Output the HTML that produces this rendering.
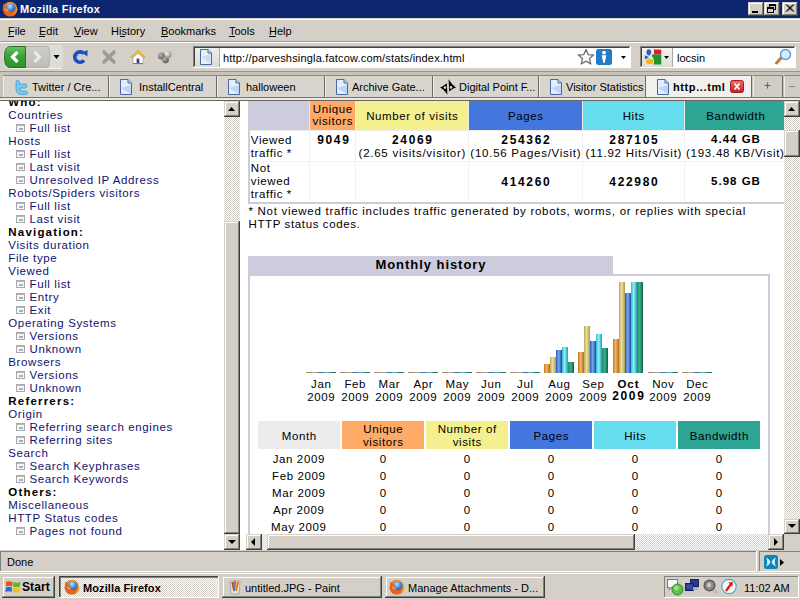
<!DOCTYPE html><html><head><meta charset="utf-8"><style>
html,body{margin:0;padding:0;width:800px;height:600px;overflow:hidden;background:#D4D0C8;}
body{position:relative;font-family:"Liberation Sans",sans-serif;}
.r{position:absolute;}
.t{position:absolute;white-space:nowrap;}
svg{position:absolute;}
</style></head><body>
<div class="r" style="left:0px;top:0px;width:800px;height:18px;background:#0C2670;"></div>
<svg style="left:2px;top:1px" width="16" height="16" viewBox="0 0 16 16">
<defs><radialGradient id="foa" cx="0.65" cy="0.4" r="0.75"><stop offset="0" stop-color="#FFD040"/><stop offset="0.55" stop-color="#F08A20"/><stop offset="1" stop-color="#C84010"/></radialGradient>
<radialGradient id="gla" cx="0.4" cy="0.3" r="0.8"><stop offset="0" stop-color="#B8E0F8"/><stop offset="0.5" stop-color="#4A8AD8"/><stop offset="1" stop-color="#1A3A90"/></radialGradient></defs>
<circle cx="8" cy="8.2" r="7.4" fill="url(#foa)"/>
<circle cx="8.8" cy="7" r="4.8" fill="url(#gla)"/>
<path d="M1.5 2.2 C2.5 4.5 3.8 5.8 5.8 6.3 C5 8 5.8 10.8 8.6 11 C11 11.2 12.8 9.6 13.4 7.2 C13.8 11.2 11.2 14.6 8 14.6 C4.2 14.6 1 11.6 1 7.6 C1 5.6 1.2 3.8 1.5 2.2Z" fill="#E8641A"/>
<path d="M3.2 7.5 C4 9 5 9.8 6.5 9.5" fill="none" stroke="#F8A8A0" stroke-width="1.2"/>
</svg>
<div class="t" style="top:2.69px;font-size:11px;line-height:13px;color:#FFFFFF;font-weight:bold;letter-spacing:0.25px;left:20px;">Mozilla Firefox</div>
<div class="r" style="left:748px;top:2px;width:16px;height:14px;background:#404040;"></div>
<div class="r" style="left:748px;top:2px;width:15px;height:13px;background:#D4D0C8;"></div>
<div class="r" style="left:749px;top:3px;width:14px;height:12px;background:#808080;"></div>
<div class="r" style="left:749px;top:3px;width:13px;height:11px;background:#FFFFFF;"></div>
<div class="r" style="left:750px;top:4px;width:12px;height:10px;background:#D4D0C8;"></div>
<div class="r" style="left:764px;top:2px;width:16px;height:14px;background:#404040;"></div>
<div class="r" style="left:764px;top:2px;width:15px;height:13px;background:#D4D0C8;"></div>
<div class="r" style="left:765px;top:3px;width:14px;height:12px;background:#808080;"></div>
<div class="r" style="left:765px;top:3px;width:13px;height:11px;background:#FFFFFF;"></div>
<div class="r" style="left:766px;top:4px;width:12px;height:10px;background:#D4D0C8;"></div>
<div class="r" style="left:782px;top:2px;width:16px;height:14px;background:#404040;"></div>
<div class="r" style="left:782px;top:2px;width:15px;height:13px;background:#D4D0C8;"></div>
<div class="r" style="left:783px;top:3px;width:14px;height:12px;background:#808080;"></div>
<div class="r" style="left:783px;top:3px;width:13px;height:11px;background:#FFFFFF;"></div>
<div class="r" style="left:784px;top:4px;width:12px;height:10px;background:#D4D0C8;"></div>
<div class="r" style="left:752px;top:11px;width:6px;height:2px;background:#000;"></div>
<svg style="left:766px;top:3px" width="12" height="11" viewBox="0 0 12 11">
<rect x="3.5" y="1.5" width="6" height="5" fill="none" stroke="#000"/><rect x="3" y="1" width="7" height="2" fill="#000"/>
<rect x="1.5" y="4.5" width="6" height="5" fill="#D4D0C8" stroke="#000"/><rect x="1" y="4" width="7" height="2" fill="#000"/>
</svg>
<svg style="left:785px;top:4px" width="10" height="9" viewBox="0 0 10 9">
<path d="M1 0.5 L8 7.5 M2 0.5 L9 7.5 M8 0.5 L1 7.5 M9 0.5 L2 7.5" stroke="#000" stroke-width="1"/>
</svg>
<div class="r" style="left:0px;top:18px;width:800px;height:1px;background:#D4D0C8;"></div>
<div class="r" style="left:0px;top:19px;width:800px;height:1px;background:#FFFFFF;"></div>
<div class="t" style="top:24.99px;font-size:11px;line-height:13px;color:#000;font-weight:normal;left:8px;">File</div>
<div class="t" style="top:24.99px;font-size:11px;line-height:13px;color:#000;font-weight:normal;left:39px;">Edit</div>
<div class="t" style="top:24.99px;font-size:11px;line-height:13px;color:#000;font-weight:normal;left:74px;">View</div>
<div class="t" style="top:24.99px;font-size:11px;line-height:13px;color:#000;font-weight:normal;left:111px;">History</div>
<div class="t" style="top:24.99px;font-size:11px;line-height:13px;color:#000;font-weight:normal;left:161px;">Bookmarks</div>
<div class="t" style="top:24.99px;font-size:11px;line-height:13px;color:#000;font-weight:normal;left:229px;">Tools</div>
<div class="t" style="top:24.99px;font-size:11px;line-height:13px;color:#000;font-weight:normal;left:269px;">Help</div>
<div class="r" style="left:8px;top:36px;width:6px;height:1px;background:#000;"></div>
<div class="r" style="left:39px;top:36px;width:6px;height:1px;background:#000;"></div>
<div class="r" style="left:74px;top:36px;width:7px;height:1px;background:#000;"></div>
<div class="r" style="left:120px;top:36px;width:5px;height:1px;background:#000;"></div>
<div class="r" style="left:161px;top:36px;width:7px;height:1px;background:#000;"></div>
<div class="r" style="left:229px;top:36px;width:6px;height:1px;background:#000;"></div>
<div class="r" style="left:269px;top:36px;width:7px;height:1px;background:#000;"></div>
<div class="r" style="left:0px;top:41px;width:800px;height:1px;background:#A09C94;"></div>
<div class="r" style="left:0px;top:42px;width:800px;height:1px;background:#FFFFFF;"></div>
<svg style="left:2px;top:44px" width="62" height="26" viewBox="0 0 62 26">
<defs>
<linearGradient id="gb" x1="0" y1="0" x2="0" y2="1"><stop offset="0" stop-color="#6CC068"/><stop offset="0.45" stop-color="#3AA238"/><stop offset="1" stop-color="#2A962A"/></linearGradient>
<linearGradient id="gf" x1="0" y1="0" x2="0" y2="1"><stop offset="0" stop-color="#CFCDC8"/><stop offset="1" stop-color="#BEBCB6"/></linearGradient>
</defs>
<path d="M60 1 C62 6 62 20 60 25 L9 25 C3 25 0.5 21 0.5 13 C0.5 5 3 1 9 1Z" fill="#DEDCD6"/>
<path d="M59 24.5 L9 24.5" stroke="#F6F4F0" stroke-width="1"/>
<path d="M23 2.5 L46 2.5 C48.5 6 48.5 20 46 23.5 L23 23.5Z" fill="url(#gf)" stroke="#B4B2AC" stroke-width="1"/>
<path d="M23.5 2.5 L8.5 2.5 C4 2.5 2.5 6 2.5 13 C2.5 20 4 23.5 8.5 23.5 L23.5 23.5Z" fill="url(#gb)" stroke="#2A6A28" stroke-width="1"/>
<path d="M15.5 8 L10.5 13 L15.5 18" fill="none" stroke="#FFFFFF" stroke-width="3.2"/>
<path d="M32.5 8 L37.5 13 L32.5 18" fill="none" stroke="#EEECE6" stroke-width="3"/>
<path d="M51.5 11 L57.5 11 L54.5 15Z" fill="#000"/>
</svg>
<svg style="left:72px;top:49px" width="16" height="16" viewBox="0 0 16 16">
<path d="M12 11.3 A5.2 5.2 0 1 1 11.8 4.6" fill="none" stroke="#1A4EC0" stroke-width="3.6"/>
<path d="M9.6 3.4 L15.6 0.9 L15.4 7.6Z" fill="#1A4EC0"/>
<path d="M5 9.5 A3.2 3.2 0 0 1 6.5 5.2" fill="none" stroke="#5A8AE0" stroke-width="1"/>
</svg>
<svg style="left:101px;top:49px" width="16" height="16" viewBox="0 0 16 16">
<path d="M3 3 L13 13 M13 3 L3 13" stroke="#9C9A92" stroke-width="3.6" stroke-linecap="round"/>
</svg>
<svg style="left:130px;top:49px" width="16" height="16" viewBox="0 0 16 16">
<path d="M0.8 8.2 L8 1.2 L15.2 8.2 L13 8.8 L8 4.5 L3 8.8Z" fill="#F2C020" stroke="#D89A10" stroke-width="0.6"/>
<path d="M3 8.5 L8 4.2 L13 8.5 L13 14.8 L3 14.8Z" fill="#FFFFFF" stroke="#9AA0B0" stroke-width="0.7"/>
<rect x="6.6" y="9.6" width="2.8" height="5.2" fill="#404A60"/>
<rect x="3" y="14" width="10" height="1" fill="#5A7AC0"/>
</svg>
<svg style="left:157px;top:50px" width="16" height="14" viewBox="0 0 16 14">
<defs><radialGradient id="sph" cx="0.35" cy="0.35" r="0.7"><stop offset="0" stop-color="#B8B6B2"/><stop offset="1" stop-color="#585652"/></radialGradient>
<radialGradient id="sph2" cx="0.35" cy="0.35" r="0.7"><stop offset="0" stop-color="#F4F4F2"/><stop offset="1" stop-color="#8A8884"/></radialGradient></defs>
<circle cx="4.5" cy="6" r="3.6" fill="url(#sph)"/><circle cx="8.5" cy="9.8" r="3.4" fill="url(#sph)"/><circle cx="11" cy="4.5" r="3.6" fill="url(#sph2)"/>
</svg>
<div class="r" style="left:193px;top:46px;width:438px;height:22px;background:#FFFFFF;"></div>
<div class="r" style="left:193px;top:46px;width:437px;height:21px;background:#808080;"></div>
<div class="r" style="left:194px;top:47px;width:436px;height:20px;background:#D4D0C8;"></div>
<div class="r" style="left:194px;top:47px;width:435px;height:19px;background:#404040;"></div>
<div class="r" style="left:195px;top:48px;width:435px;height:19px;background:#FFFFFF;"></div>
<div class="r" style="left:195px;top:48px;width:24px;height:19px;background:linear-gradient(#F0EEEA,#DCDAD4);"></div>
<div class="r" style="left:219px;top:48px;width:1px;height:19px;background:#B0AEA8;"></div>
<svg style="left:199px;top:49px" width="14" height="16" viewBox="0 0 14 16">
<path d="M1.5 0.5 L9 0.5 L12.5 4 L12.5 15.5 L1.5 15.5Z" fill="#E8F0FC" stroke="#4A68A8"/>
<path d="M9 0.5 L9 4 L12.5 4" fill="#C8D8F0" stroke="#4A68A8"/>
<path d="M2.5 8 L11.5 15 L11.5 5Z" fill="#B8D0F0" opacity="0.6"/>
</svg>
<div class="t" style="top:51.69px;font-size:11px;line-height:13px;color:#000;font-weight:normal;letter-spacing:0.18px;left:223px;">http://parveshsingla.fatcow.com/stats/index.html</div>
<svg style="left:577px;top:48px" width="18" height="18" viewBox="0 0 18 18">
<path d="M9 1.5 L11.2 6.6 L16.6 7 L12.5 10.6 L13.8 16 L9 13.1 L4.2 16 L5.5 10.6 L1.4 7 L6.8 6.6Z" fill="#FFFFFF" stroke="#707070" stroke-width="1.3" stroke-linejoin="round"/>
</svg>
<svg style="left:596px;top:49px" width="16" height="16" viewBox="0 0 16 16">
<rect x="0" y="0" width="16" height="16" rx="2.5" fill="#1E7CC8"/>
<circle cx="8" cy="3.6" r="1.9" fill="#fff"/><path d="M5.6 6.2 L10.4 6.2 L8.6 14 L7.4 14Z" fill="#fff"/>
</svg>
<svg style="left:621px;top:56px" width="5" height="3" viewBox="0 0 5 3"><path d="M0 0 L5 0 L2.5 3Z" fill="#000"/></svg>
<div class="r" style="left:640px;top:46px;width:156px;height:22px;background:#FFFFFF;"></div>
<div class="r" style="left:640px;top:46px;width:155px;height:21px;background:#808080;"></div>
<div class="r" style="left:641px;top:47px;width:154px;height:20px;background:#D4D0C8;"></div>
<div class="r" style="left:641px;top:47px;width:153px;height:19px;background:#404040;"></div>
<div class="r" style="left:642px;top:48px;width:153px;height:19px;background:#FFFFFF;"></div>
<div class="r" style="left:642px;top:48px;width:30px;height:19px;background:linear-gradient(#F4F2EE,#E0DED8);"></div>
<div class="r" style="left:672px;top:48px;width:1px;height:19px;background:#A8A6A0;"></div>
<svg style="left:644px;top:48px" width="18" height="18" viewBox="0 0 18 18">
<ellipse cx="4.8" cy="4.3" rx="2.4" ry="3.1" fill="#2A62C8"/>
<path d="M0.8 7.2 L5.2 9.3 L0.8 11.2Z" fill="#2A5AB8"/>
<ellipse cx="5.6" cy="13.4" rx="3.6" ry="2.6" fill="#F4B41A"/>
<path d="M9.8 1.5 L16.5 1.5 C17 1.5 17.3 2 17.3 3 L17.3 6.4 L10.2 6.4Z" fill="#E41E1E"/>
<path d="M8 6.4 L17.3 6.4 L17.3 16.5 L9.5 16.5 C10.5 14 10 10 8 8.5Z" fill="#1E962E"/>
</svg>
<svg style="left:664px;top:56px" width="5" height="3" viewBox="0 0 5 3"><path d="M0 0 L5 0 L2.5 3Z" fill="#000"/></svg>
<div class="t" style="top:51.69px;font-size:11px;line-height:13px;color:#000;font-weight:normal;left:677px;">locsin</div>
<svg style="left:775px;top:48px" width="17" height="17" viewBox="0 0 17 17">
<path d="M6 10 L1.5 15" stroke="#D07A30" stroke-width="3" stroke-linecap="round"/>
<circle cx="10.5" cy="6.5" r="5" fill="#D4ECFC" stroke="#5A9AD0" stroke-width="1.4"/>
</svg>
<div class="r" style="left:0px;top:71px;width:800px;height:1px;background:#9A968E;"></div>
<div class="r" style="left:0px;top:72px;width:800px;height:25px;background:#C8C4BC;"></div>
<div class="r" style="left:3px;top:75px;width:106px;height:22px;background:#8A867E;"></div>
<div class="r" style="left:3px;top:76px;width:105px;height:21px;background:#F0EEE8;"></div>
<div class="r" style="left:4px;top:76px;width:104px;height:21px;background:#D8D5CE;"></div>
<div class="r" style="left:108px;top:76px;width:1px;height:21px;background:#6E6A62;"></div>
<svg style="left:14px;top:79px" width="16" height="16" viewBox="0 0 16 16">
<path d="M3 1.5 C5 1.5 5.5 2.5 5.5 4 L5.5 5 L11 5 C12.5 5 13 6 13 7 C13 8 12.5 9 11 9 L6 9 C6 11 6.5 12 8 12 L11.5 12 C13 12 13.5 13 13.5 14 C13.5 15 13 15.5 11.5 15.5 L7.5 15.5 C4 15.5 2 13.5 2 10 L2 3 C2 2 2.5 1.5 3 1.5Z" fill="#7CC8EC" stroke="#3AA0D8" stroke-width="0.8"/></svg>
<div class="t" style="top:81.09px;font-size:11px;line-height:13px;color:#000;font-weight:normal;left:32px;">Twitter / Cre...</div>
<div class="r" style="left:109px;top:75px;width:108px;height:22px;background:#8A867E;"></div>
<div class="r" style="left:109px;top:76px;width:107px;height:21px;background:#F0EEE8;"></div>
<div class="r" style="left:110px;top:76px;width:106px;height:21px;background:#D8D5CE;"></div>
<div class="r" style="left:216px;top:76px;width:1px;height:21px;background:#6E6A62;"></div>
<svg style="left:119px;top:79px" width="14" height="16" viewBox="0 0 14 16">
<path d="M1.5 0.5 L9 0.5 L12.5 4 L12.5 15.5 L1.5 15.5Z" fill="#E4EEFC" stroke="#4A68A8"/>
<path d="M9 0.5 L9 4 L12.5 4" fill="#C8D8F0" stroke="#4A68A8"/>
<path d="M2 9 L12 15 L12 6Z" fill="#A8C4EC" opacity="0.6"/></svg>
<div class="t" style="top:81.09px;font-size:11px;line-height:13px;color:#000;font-weight:normal;left:139px;">InstallCentral</div>
<div class="r" style="left:217px;top:75px;width:108px;height:22px;background:#8A867E;"></div>
<div class="r" style="left:217px;top:76px;width:107px;height:21px;background:#F0EEE8;"></div>
<div class="r" style="left:218px;top:76px;width:106px;height:21px;background:#D8D5CE;"></div>
<div class="r" style="left:324px;top:76px;width:1px;height:21px;background:#6E6A62;"></div>
<svg style="left:227px;top:79px" width="14" height="16" viewBox="0 0 14 16">
<path d="M1.5 0.5 L9 0.5 L12.5 4 L12.5 15.5 L1.5 15.5Z" fill="#E4EEFC" stroke="#4A68A8"/>
<path d="M9 0.5 L9 4 L12.5 4" fill="#C8D8F0" stroke="#4A68A8"/>
<path d="M2 9 L12 15 L12 6Z" fill="#A8C4EC" opacity="0.6"/></svg>
<div class="t" style="top:81.09px;font-size:11px;line-height:13px;color:#000;font-weight:normal;left:246px;">halloween</div>
<div class="r" style="left:325px;top:75px;width:108px;height:22px;background:#8A867E;"></div>
<div class="r" style="left:325px;top:76px;width:107px;height:21px;background:#F0EEE8;"></div>
<div class="r" style="left:326px;top:76px;width:106px;height:21px;background:#D8D5CE;"></div>
<div class="r" style="left:432px;top:76px;width:1px;height:21px;background:#6E6A62;"></div>
<svg style="left:335px;top:79px" width="14" height="16" viewBox="0 0 14 16">
<path d="M1.5 0.5 L9 0.5 L12.5 4 L12.5 15.5 L1.5 15.5Z" fill="#E4EEFC" stroke="#4A68A8"/>
<path d="M9 0.5 L9 4 L12.5 4" fill="#C8D8F0" stroke="#4A68A8"/>
<path d="M2 9 L12 15 L12 6Z" fill="#A8C4EC" opacity="0.6"/></svg>
<div class="t" style="top:81.09px;font-size:11px;line-height:13px;color:#000;font-weight:normal;left:352px;">Archive Gate...</div>
<div class="r" style="left:433px;top:75px;width:106px;height:22px;background:#8A867E;"></div>
<div class="r" style="left:433px;top:76px;width:105px;height:21px;background:#F0EEE8;"></div>
<div class="r" style="left:434px;top:76px;width:104px;height:21px;background:#D8D5CE;"></div>
<div class="r" style="left:538px;top:76px;width:1px;height:21px;background:#6E6A62;"></div>
<svg style="left:440px;top:79px" width="16" height="16" viewBox="0 0 16 16">
<path d="M0 8.5 C2.5 7.5 4.5 6 6.8 4.2 L7.4 15.8 C5.5 12.5 3 10 0 8.5Z M5 7.2 A1.4 1.4 0 1 0 5 10 A1.4 1.4 0 1 0 5 7.2Z" fill="#000" fill-rule="evenodd"/>
<path d="M8.6 0.3 C10.5 3.5 13 6.5 16 8.5 C13.5 9.2 11.5 10.5 9.2 12.6Z M11 7 A1.4 1.4 0 1 0 11 9.8 A1.4 1.4 0 1 0 11 7Z" fill="#000" fill-rule="evenodd"/>
</svg>
<div class="t" style="top:81.09px;font-size:11px;line-height:13px;color:#000;font-weight:normal;left:459px;">Digital Point F...</div>
<div class="r" style="left:539px;top:75px;width:107px;height:22px;background:#8A867E;"></div>
<div class="r" style="left:539px;top:76px;width:106px;height:21px;background:#F0EEE8;"></div>
<div class="r" style="left:540px;top:76px;width:105px;height:21px;background:#D8D5CE;"></div>
<div class="r" style="left:645px;top:76px;width:1px;height:21px;background:#6E6A62;"></div>
<svg style="left:549px;top:79px" width="14" height="16" viewBox="0 0 14 16">
<path d="M1.5 0.5 L9 0.5 L12.5 4 L12.5 15.5 L1.5 15.5Z" fill="#E4EEFC" stroke="#4A68A8"/>
<path d="M9 0.5 L9 4 L12.5 4" fill="#C8D8F0" stroke="#4A68A8"/>
<path d="M2 9 L12 15 L12 6Z" fill="#A8C4EC" opacity="0.6"/></svg>
<div class="t" style="top:81.09px;font-size:11px;line-height:13px;color:#000;font-weight:normal;left:566px;">Visitor Statistics</div>
<div class="r" style="left:646px;top:75px;width:106px;height:22px;background:#8A867E;"></div>
<div class="r" style="left:646px;top:76px;width:105px;height:21px;background:#F2F0EC;"></div>
<div class="r" style="left:647px;top:76px;width:104px;height:21px;background:#F2F0EC;"></div>
<div class="r" style="left:751px;top:76px;width:1px;height:21px;background:#6E6A62;"></div>
<svg style="left:656px;top:79px" width="14" height="16" viewBox="0 0 14 16">
<path d="M1.5 0.5 L9 0.5 L12.5 4 L12.5 15.5 L1.5 15.5Z" fill="#E4EEFC" stroke="#4A68A8"/>
<path d="M9 0.5 L9 4 L12.5 4" fill="#C8D8F0" stroke="#4A68A8"/>
<path d="M2 9 L12 15 L12 6Z" fill="#A8C4EC" opacity="0.6"/></svg>
<div class="t" style="top:81.09px;font-size:11px;line-height:13px;color:#000;font-weight:bold;letter-spacing:0.6px;left:673px;">http...tml</div>
<svg style="left:730px;top:80px" width="14" height="13" viewBox="0 0 14 13">
<defs><linearGradient id="rc" x1="0" y1="0" x2="0" y2="1"><stop offset="0" stop-color="#F07070"/><stop offset="1" stop-color="#C02020"/></linearGradient></defs>
<rect x="0.5" y="0.5" width="13" height="12" rx="2" fill="url(#rc)" stroke="#A02020"/>
<path d="M4.5 3.5 L9.5 9.5 M9.5 3.5 L4.5 9.5" stroke="#fff" stroke-width="1.8"/></svg>
<div class="r" style="left:753px;top:75px;width:30px;height:22px;background:#8A867E;"></div>
<div class="r" style="left:753px;top:76px;width:29px;height:21px;background:#F0EEE8;"></div>
<div class="r" style="left:754px;top:76px;width:28px;height:21px;background:#D0CDC6;"></div>
<div class="r" style="left:782px;top:76px;width:1px;height:21px;background:#6E6A62;"></div>
<svg style="left:764px;top:82px" width="7" height="7" viewBox="0 0 7 7"><path d="M3.5 0.5 V6.5 M0.5 3.5 H6.5" stroke="#6A6862" stroke-width="1.2"/></svg>
<div class="r" style="left:784px;top:75px;width:16px;height:22px;background:#8A867E;"></div>
<div class="r" style="left:784px;top:76px;width:16px;height:21px;background:#F0EEE8;"></div>
<div class="r" style="left:785px;top:76px;width:15px;height:21px;background:#D0CDC6;"></div>
<div class="r" style="left:789px;top:86px;width:6px;height:1px;background:#8A8882;"></div>
<div class="r" style="left:0px;top:97px;width:800px;height:1px;background:#7A766E;"></div>
<div class="r" style="left:0px;top:98px;width:800px;height:2px;background:#EAE8E2;"></div>
<div class="r" style="left:0px;top:100px;width:800px;height:1px;background:#6A665E;"></div>
<div class="r" style="left:0px;top:550px;width:800px;height:22px;background:#D4D0C8;"></div>
<div class="r" style="left:0px;top:551px;width:757px;height:1px;background:#808080;"></div>
<div class="r" style="left:0px;top:551px;width:1px;height:20px;background:#808080;"></div>
<div class="r" style="left:0px;top:571px;width:757px;height:1px;background:#FFFFFF;"></div>
<div class="r" style="left:756px;top:551px;width:1px;height:21px;background:#FFFFFF;"></div>
<div class="t" style="top:555.69px;font-size:11px;line-height:13px;color:#000;font-weight:normal;left:7px;">Done</div>
<div class="r" style="left:759px;top:551px;width:41px;height:1px;background:#808080;"></div>
<div class="r" style="left:759px;top:551px;width:1px;height:20px;background:#808080;"></div>
<div class="r" style="left:759px;top:571px;width:41px;height:1px;background:#FFFFFF;"></div>
<svg style="left:764px;top:555px" width="14" height="14" viewBox="0 0 14 14">
<rect x="0" y="0" width="14" height="14" rx="2.5" fill="#1484B4"/>
<path d="M2 2.5 C4.5 3.5 6 5.5 6.3 7 C6 8.5 4.5 10.5 2 11.5 C3 9.5 3.5 8 3 7 C3.5 6 3 4.5 2 2.5Z" fill="#C8F0FF"/>
<path d="M12 2.5 C9.5 3.5 8 5.5 7.7 7 C8 8.5 9.5 10.5 12 11.5 C11 9.5 10.5 8 11 7 C10.5 6 11 4.5 12 2.5Z" fill="#C8F0FF"/>
</svg>
<svg style="left:780px;top:559px" width="4" height="7" viewBox="0 0 4 7"><path d="M0 0 L4 3.5 L0 7Z" fill="#000"/></svg>
<div class="r" style="left:0px;top:572px;width:800px;height:28px;background:#D4D0C8;"></div>
<div class="r" style="left:0px;top:572px;width:800px;height:1px;background:#D4D0C8;"></div>
<div class="r" style="left:0px;top:573px;width:800px;height:1px;background:#FFFFFF;"></div>
<div class="r" style="left:2px;top:576px;width:53px;height:22px;background:#404040;"></div>
<div class="r" style="left:2px;top:576px;width:52px;height:21px;background:#D4D0C8;"></div>
<div class="r" style="left:3px;top:577px;width:51px;height:20px;background:#808080;"></div>
<div class="r" style="left:3px;top:577px;width:50px;height:19px;background:#FFFFFF;"></div>
<div class="r" style="left:4px;top:578px;width:49px;height:18px;background:#D4D0C8;"></div>
<svg style="left:5px;top:579px" width="16" height="16" viewBox="0 0 16 16">
<path d="M1 3 C3 2 5 2 7.5 3 L7 7.5 C5 6.5 3 6.5 1 7.5Z" fill="#E8501A"/>
<path d="M8.5 3 C11 4 13 4 15.5 3 L15 7.5 C12.5 8.5 10.5 8.5 8 7.5Z" fill="#5AB82A"/>
<path d="M1 8.5 C3 7.5 5 7.5 7 8.5 L6.5 13 C4.5 12 2.5 12 0.5 13Z" fill="#2A6AD8"/>
<path d="M8 8.5 C10.5 9.5 12.5 9.5 15 8.5 L14.5 13 C12 14 10 14 7.5 13Z" fill="#F0C01A"/>
</svg>
<div class="t" style="top:579.84px;font-size:12px;line-height:14px;color:#000;font-weight:bold;letter-spacing:0.1px;left:22px;">Start</div>
<div class="r" style="left:59px;top:576px;width:160px;height:22px;background:#FFFFFF;"></div>
<div class="r" style="left:59px;top:576px;width:159px;height:21px;background:#404040;"></div>
<div class="r" style="left:60px;top:577px;width:158px;height:20px;background:#808080;"></div>
<div class="r" style="left:61px;top:578px;width:157px;height:19px;background:repeating-conic-gradient(#D4D0C8 0 25%, #FFFFFF 0 50%) 0 0/2px 2px;"></div>
<svg style="left:64px;top:579px" width="16" height="16" viewBox="0 0 16 16">
<defs><radialGradient id="fob" cx="0.65" cy="0.4" r="0.75"><stop offset="0" stop-color="#FFD040"/><stop offset="0.55" stop-color="#F08A20"/><stop offset="1" stop-color="#C84010"/></radialGradient>
<radialGradient id="glb" cx="0.4" cy="0.3" r="0.8"><stop offset="0" stop-color="#B8E0F8"/><stop offset="0.5" stop-color="#4A8AD8"/><stop offset="1" stop-color="#1A3A90"/></radialGradient></defs>
<circle cx="8" cy="8.2" r="7.4" fill="url(#fob)"/>
<circle cx="8.8" cy="7" r="4.8" fill="url(#glb)"/>
<path d="M1.5 2.2 C2.5 4.5 3.8 5.8 5.8 6.3 C5 8 5.8 10.8 8.6 11 C11 11.2 12.8 9.6 13.4 7.2 C13.8 11.2 11.2 14.6 8 14.6 C4.2 14.6 1 11.6 1 7.6 C1 5.6 1.2 3.8 1.5 2.2Z" fill="#E8641A"/>
<path d="M3.2 7.5 C4 9 5 9.8 6.5 9.5" fill="none" stroke="#F8A8A0" stroke-width="1.2"/>
</svg>
<div class="t" style="top:581.69px;font-size:11px;line-height:13px;color:#000;font-weight:bold;letter-spacing:0.1px;left:83px;">Mozilla Firefox</div>
<div class="r" style="left:222px;top:576px;width:160px;height:22px;background:#404040;"></div>
<div class="r" style="left:222px;top:576px;width:159px;height:21px;background:#D4D0C8;"></div>
<div class="r" style="left:223px;top:577px;width:158px;height:20px;background:#808080;"></div>
<div class="r" style="left:223px;top:577px;width:157px;height:19px;background:#FFFFFF;"></div>
<div class="r" style="left:224px;top:578px;width:156px;height:18px;background:#D4D0C8;"></div>
<svg style="left:227px;top:579px" width="16" height="16" viewBox="0 0 16 16">
<path d="M3 2 L13 2 L12 15 L4 15Z" fill="#E8E4DC" stroke="#A09C94" stroke-width="0.8"/>
<path d="M5 3 L7 12 M8 2 L8 12 M11 3 L9 12" stroke="#D83A2A" stroke-width="1.5"/>
<path d="M6 3 L8 12" stroke="#2A8AD8" stroke-width="1.2"/><path d="M10 3 L8.5 12" stroke="#F0C01A" stroke-width="1.2"/>
</svg>
<div class="t" style="top:581.69px;font-size:11px;line-height:13px;color:#000;font-weight:normal;left:245px;">untitled.JPG - Paint</div>
<div class="r" style="left:385px;top:576px;width:160px;height:22px;background:#404040;"></div>
<div class="r" style="left:385px;top:576px;width:159px;height:21px;background:#D4D0C8;"></div>
<div class="r" style="left:386px;top:577px;width:158px;height:20px;background:#808080;"></div>
<div class="r" style="left:386px;top:577px;width:157px;height:19px;background:#FFFFFF;"></div>
<div class="r" style="left:387px;top:578px;width:156px;height:18px;background:#D4D0C8;"></div>
<svg style="left:389px;top:579px" width="16" height="16" viewBox="0 0 16 16">
<defs><radialGradient id="foc" cx="0.65" cy="0.4" r="0.75"><stop offset="0" stop-color="#FFD040"/><stop offset="0.55" stop-color="#F08A20"/><stop offset="1" stop-color="#C84010"/></radialGradient>
<radialGradient id="glc" cx="0.4" cy="0.3" r="0.8"><stop offset="0" stop-color="#B8E0F8"/><stop offset="0.5" stop-color="#4A8AD8"/><stop offset="1" stop-color="#1A3A90"/></radialGradient></defs>
<circle cx="8" cy="8.2" r="7.4" fill="url(#foc)"/>
<circle cx="8.8" cy="7" r="4.8" fill="url(#glc)"/>
<path d="M1.5 2.2 C2.5 4.5 3.8 5.8 5.8 6.3 C5 8 5.8 10.8 8.6 11 C11 11.2 12.8 9.6 13.4 7.2 C13.8 11.2 11.2 14.6 8 14.6 C4.2 14.6 1 11.6 1 7.6 C1 5.6 1.2 3.8 1.5 2.2Z" fill="#E8641A"/>
<path d="M3.2 7.5 C4 9 5 9.8 6.5 9.5" fill="none" stroke="#F8A8A0" stroke-width="1.2"/>
</svg>
<div class="t" style="top:581.69px;font-size:11px;line-height:13px;color:#000;font-weight:normal;left:408px;">Manage Attachments - D...</div>
<div class="r" style="left:664px;top:576px;width:134px;height:1px;background:#808080;"></div>
<div class="r" style="left:664px;top:576px;width:1px;height:21px;background:#808080;"></div>
<div class="r" style="left:664px;top:597px;width:135px;height:1px;background:#FFFFFF;"></div>
<div class="r" style="left:798px;top:576px;width:1px;height:22px;background:#FFFFFF;"></div>
<svg style="left:667px;top:579px" width="17" height="17" viewBox="0 0 17 17">
<rect x="0.5" y="0.5" width="10" height="8" fill="#F8F8F8" stroke="#7A7A7A"/><path d="M2 8.5 L2 11 L4.5 8.5" fill="#F8F8F8" stroke="#7A7A7A"/>
<circle cx="10.5" cy="10.5" r="5.5" fill="#5CC048" stroke="#2E8A22"/><circle cx="9.5" cy="9" r="2.5" fill="#9ADA80"/></svg>
<svg style="left:685px;top:579px" width="14" height="16" viewBox="0 0 14 16">
<rect x="5.5" y="0.5" width="8" height="7" fill="#2A3A8A" stroke="#1A2060"/><rect x="0.5" y="4.5" width="8" height="7" fill="#2A3A8A" stroke="#1A2060"/>
<rect x="1.5" y="5.5" width="6" height="4" fill="#3A4AAA"/>
<rect x="1" y="12" width="8" height="3" fill="#C8C8E0"/><rect x="8" y="8" width="5" height="3" fill="#A8A8D0"/></svg>
<svg style="left:703px;top:579px" width="16" height="16" viewBox="0 0 16 16">
<circle cx="6.5" cy="6.5" r="6" fill="#5A5A5A"/><circle cx="6.5" cy="6.5" r="4.5" fill="#8A8A8A"/><circle cx="6" cy="6" r="2.2" fill="#C8C8C8"/>
<path d="M10 12 L13 15 M12 11 L15 14" stroke="#8A8ACA" stroke-width="0.8"/></svg>
<svg style="left:721px;top:578px" width="16" height="17" viewBox="0 0 16 17">
<circle cx="8" cy="8.5" r="7.2" fill="#F4F6FA" stroke="#4AA8C0" stroke-width="1.2"/>
<path d="M5 13 L10 6" stroke="#E01818" stroke-width="2.2"/><path d="M7.5 4.5 L12 4 L11.2 8.8Z" fill="#E01818"/></svg>
<div class="t" style="top:581.69px;font-size:11px;line-height:13px;color:#000;font-weight:normal;left:744px;">11:02 AM</div>
<div class="r" style="left:0px;top:101px;width:246px;height:449px;background:#FFFFFF;"></div>
<div style="position:absolute;left:0;top:101px;width:224px;height:449px;overflow:hidden">
<div class="t" style="top:-6.48px;font-size:11.5px;line-height:14px;color:#000;font-weight:bold;letter-spacing:1.2px;left:8.3px;">Who:</div>
<div class="t" style="top:6.52px;font-size:11.5px;line-height:14px;color:#12126E;font-weight:normal;letter-spacing:0.62px;left:8.3px;">Countries</div>
<svg style="left:16px;top:23px" width="9" height="8" viewBox="0 0 9 8">
<rect x="0" y="0" width="9" height="8" fill="#A8A8B4"/><rect x="1" y="1" width="7" height="6" fill="#F6F6F2"/>
<rect x="1" y="1" width="7" height="1" fill="#B8B8A0"/><rect x="3" y="4" width="4" height="2" fill="#A8ACC8"/></svg>
<div class="t" style="top:19.52px;font-size:11.5px;line-height:14px;color:#12126E;font-weight:normal;letter-spacing:0.62px;left:29.5px;">Full list</div>
<div class="t" style="top:32.52px;font-size:11.5px;line-height:14px;color:#12126E;font-weight:normal;letter-spacing:0.62px;left:8.3px;">Hosts</div>
<svg style="left:16px;top:49px" width="9" height="8" viewBox="0 0 9 8">
<rect x="0" y="0" width="9" height="8" fill="#A8A8B4"/><rect x="1" y="1" width="7" height="6" fill="#F6F6F2"/>
<rect x="1" y="1" width="7" height="1" fill="#B8B8A0"/><rect x="3" y="4" width="4" height="2" fill="#A8ACC8"/></svg>
<div class="t" style="top:45.52px;font-size:11.5px;line-height:14px;color:#12126E;font-weight:normal;letter-spacing:0.62px;left:29.5px;">Full list</div>
<svg style="left:16px;top:62px" width="9" height="8" viewBox="0 0 9 8">
<rect x="0" y="0" width="9" height="8" fill="#A8A8B4"/><rect x="1" y="1" width="7" height="6" fill="#F6F6F2"/>
<rect x="1" y="1" width="7" height="1" fill="#B8B8A0"/><rect x="3" y="4" width="4" height="2" fill="#A8ACC8"/></svg>
<div class="t" style="top:58.52px;font-size:11.5px;line-height:14px;color:#12126E;font-weight:normal;letter-spacing:0.62px;left:29.5px;">Last visit</div>
<svg style="left:16px;top:75px" width="9" height="8" viewBox="0 0 9 8">
<rect x="0" y="0" width="9" height="8" fill="#A8A8B4"/><rect x="1" y="1" width="7" height="6" fill="#F6F6F2"/>
<rect x="1" y="1" width="7" height="1" fill="#B8B8A0"/><rect x="3" y="4" width="4" height="2" fill="#A8ACC8"/></svg>
<div class="t" style="top:71.52px;font-size:11.5px;line-height:14px;color:#12126E;font-weight:normal;letter-spacing:0.62px;left:29.5px;">Unresolved IP Address</div>
<div class="t" style="top:84.52px;font-size:11.5px;line-height:14px;color:#12126E;font-weight:normal;letter-spacing:0.62px;left:8.3px;">Robots/Spiders visitors</div>
<svg style="left:16px;top:101px" width="9" height="8" viewBox="0 0 9 8">
<rect x="0" y="0" width="9" height="8" fill="#A8A8B4"/><rect x="1" y="1" width="7" height="6" fill="#F6F6F2"/>
<rect x="1" y="1" width="7" height="1" fill="#B8B8A0"/><rect x="3" y="4" width="4" height="2" fill="#A8ACC8"/></svg>
<div class="t" style="top:97.52px;font-size:11.5px;line-height:14px;color:#12126E;font-weight:normal;letter-spacing:0.62px;left:29.5px;">Full list</div>
<svg style="left:16px;top:114px" width="9" height="8" viewBox="0 0 9 8">
<rect x="0" y="0" width="9" height="8" fill="#A8A8B4"/><rect x="1" y="1" width="7" height="6" fill="#F6F6F2"/>
<rect x="1" y="1" width="7" height="1" fill="#B8B8A0"/><rect x="3" y="4" width="4" height="2" fill="#A8ACC8"/></svg>
<div class="t" style="top:110.52px;font-size:11.5px;line-height:14px;color:#12126E;font-weight:normal;letter-spacing:0.62px;left:29.5px;">Last visit</div>
<div class="t" style="top:123.52px;font-size:11.5px;line-height:14px;color:#000;font-weight:bold;letter-spacing:1.2px;left:8.3px;">Navigation:</div>
<div class="t" style="top:136.52px;font-size:11.5px;line-height:14px;color:#12126E;font-weight:normal;letter-spacing:0.62px;left:8.3px;">Visits duration</div>
<div class="t" style="top:149.52px;font-size:11.5px;line-height:14px;color:#12126E;font-weight:normal;letter-spacing:0.62px;left:8.3px;">File type</div>
<div class="t" style="top:162.52px;font-size:11.5px;line-height:14px;color:#12126E;font-weight:normal;letter-spacing:0.62px;left:8.3px;">Viewed</div>
<svg style="left:16px;top:179px" width="9" height="8" viewBox="0 0 9 8">
<rect x="0" y="0" width="9" height="8" fill="#A8A8B4"/><rect x="1" y="1" width="7" height="6" fill="#F6F6F2"/>
<rect x="1" y="1" width="7" height="1" fill="#B8B8A0"/><rect x="3" y="4" width="4" height="2" fill="#A8ACC8"/></svg>
<div class="t" style="top:175.52px;font-size:11.5px;line-height:14px;color:#12126E;font-weight:normal;letter-spacing:0.62px;left:29.5px;">Full list</div>
<svg style="left:16px;top:192px" width="9" height="8" viewBox="0 0 9 8">
<rect x="0" y="0" width="9" height="8" fill="#A8A8B4"/><rect x="1" y="1" width="7" height="6" fill="#F6F6F2"/>
<rect x="1" y="1" width="7" height="1" fill="#B8B8A0"/><rect x="3" y="4" width="4" height="2" fill="#A8ACC8"/></svg>
<div class="t" style="top:188.52px;font-size:11.5px;line-height:14px;color:#12126E;font-weight:normal;letter-spacing:0.62px;left:29.5px;">Entry</div>
<svg style="left:16px;top:205px" width="9" height="8" viewBox="0 0 9 8">
<rect x="0" y="0" width="9" height="8" fill="#A8A8B4"/><rect x="1" y="1" width="7" height="6" fill="#F6F6F2"/>
<rect x="1" y="1" width="7" height="1" fill="#B8B8A0"/><rect x="3" y="4" width="4" height="2" fill="#A8ACC8"/></svg>
<div class="t" style="top:201.52px;font-size:11.5px;line-height:14px;color:#12126E;font-weight:normal;letter-spacing:0.62px;left:29.5px;">Exit</div>
<div class="t" style="top:214.52px;font-size:11.5px;line-height:14px;color:#12126E;font-weight:normal;letter-spacing:0.62px;left:8.3px;">Operating Systems</div>
<svg style="left:16px;top:231px" width="9" height="8" viewBox="0 0 9 8">
<rect x="0" y="0" width="9" height="8" fill="#A8A8B4"/><rect x="1" y="1" width="7" height="6" fill="#F6F6F2"/>
<rect x="1" y="1" width="7" height="1" fill="#B8B8A0"/><rect x="3" y="4" width="4" height="2" fill="#A8ACC8"/></svg>
<div class="t" style="top:227.52px;font-size:11.5px;line-height:14px;color:#12126E;font-weight:normal;letter-spacing:0.62px;left:29.5px;">Versions</div>
<svg style="left:16px;top:244px" width="9" height="8" viewBox="0 0 9 8">
<rect x="0" y="0" width="9" height="8" fill="#A8A8B4"/><rect x="1" y="1" width="7" height="6" fill="#F6F6F2"/>
<rect x="1" y="1" width="7" height="1" fill="#B8B8A0"/><rect x="3" y="4" width="4" height="2" fill="#A8ACC8"/></svg>
<div class="t" style="top:240.52px;font-size:11.5px;line-height:14px;color:#12126E;font-weight:normal;letter-spacing:0.62px;left:29.5px;">Unknown</div>
<div class="t" style="top:253.52px;font-size:11.5px;line-height:14px;color:#12126E;font-weight:normal;letter-spacing:0.62px;left:8.3px;">Browsers</div>
<svg style="left:16px;top:270px" width="9" height="8" viewBox="0 0 9 8">
<rect x="0" y="0" width="9" height="8" fill="#A8A8B4"/><rect x="1" y="1" width="7" height="6" fill="#F6F6F2"/>
<rect x="1" y="1" width="7" height="1" fill="#B8B8A0"/><rect x="3" y="4" width="4" height="2" fill="#A8ACC8"/></svg>
<div class="t" style="top:266.52px;font-size:11.5px;line-height:14px;color:#12126E;font-weight:normal;letter-spacing:0.62px;left:29.5px;">Versions</div>
<svg style="left:16px;top:283px" width="9" height="8" viewBox="0 0 9 8">
<rect x="0" y="0" width="9" height="8" fill="#A8A8B4"/><rect x="1" y="1" width="7" height="6" fill="#F6F6F2"/>
<rect x="1" y="1" width="7" height="1" fill="#B8B8A0"/><rect x="3" y="4" width="4" height="2" fill="#A8ACC8"/></svg>
<div class="t" style="top:279.52px;font-size:11.5px;line-height:14px;color:#12126E;font-weight:normal;letter-spacing:0.62px;left:29.5px;">Unknown</div>
<div class="t" style="top:292.52px;font-size:11.5px;line-height:14px;color:#000;font-weight:bold;letter-spacing:1.2px;left:8.3px;">Referrers:</div>
<div class="t" style="top:305.52px;font-size:11.5px;line-height:14px;color:#12126E;font-weight:normal;letter-spacing:0.62px;left:8.3px;">Origin</div>
<svg style="left:16px;top:322px" width="9" height="8" viewBox="0 0 9 8">
<rect x="0" y="0" width="9" height="8" fill="#A8A8B4"/><rect x="1" y="1" width="7" height="6" fill="#F6F6F2"/>
<rect x="1" y="1" width="7" height="1" fill="#B8B8A0"/><rect x="3" y="4" width="4" height="2" fill="#A8ACC8"/></svg>
<div class="t" style="top:318.52px;font-size:11.5px;line-height:14px;color:#12126E;font-weight:normal;letter-spacing:0.62px;left:29.5px;">Referring search engines</div>
<svg style="left:16px;top:335px" width="9" height="8" viewBox="0 0 9 8">
<rect x="0" y="0" width="9" height="8" fill="#A8A8B4"/><rect x="1" y="1" width="7" height="6" fill="#F6F6F2"/>
<rect x="1" y="1" width="7" height="1" fill="#B8B8A0"/><rect x="3" y="4" width="4" height="2" fill="#A8ACC8"/></svg>
<div class="t" style="top:331.52px;font-size:11.5px;line-height:14px;color:#12126E;font-weight:normal;letter-spacing:0.62px;left:29.5px;">Referring sites</div>
<div class="t" style="top:344.52px;font-size:11.5px;line-height:14px;color:#12126E;font-weight:normal;letter-spacing:0.62px;left:8.3px;">Search</div>
<svg style="left:16px;top:361px" width="9" height="8" viewBox="0 0 9 8">
<rect x="0" y="0" width="9" height="8" fill="#A8A8B4"/><rect x="1" y="1" width="7" height="6" fill="#F6F6F2"/>
<rect x="1" y="1" width="7" height="1" fill="#B8B8A0"/><rect x="3" y="4" width="4" height="2" fill="#A8ACC8"/></svg>
<div class="t" style="top:357.52px;font-size:11.5px;line-height:14px;color:#12126E;font-weight:normal;letter-spacing:0.62px;left:29.5px;">Search Keyphrases</div>
<svg style="left:16px;top:374px" width="9" height="8" viewBox="0 0 9 8">
<rect x="0" y="0" width="9" height="8" fill="#A8A8B4"/><rect x="1" y="1" width="7" height="6" fill="#F6F6F2"/>
<rect x="1" y="1" width="7" height="1" fill="#B8B8A0"/><rect x="3" y="4" width="4" height="2" fill="#A8ACC8"/></svg>
<div class="t" style="top:370.52px;font-size:11.5px;line-height:14px;color:#12126E;font-weight:normal;letter-spacing:0.62px;left:29.5px;">Search Keywords</div>
<div class="t" style="top:383.52px;font-size:11.5px;line-height:14px;color:#000;font-weight:bold;letter-spacing:1.2px;left:8.3px;">Others:</div>
<div class="t" style="top:396.52px;font-size:11.5px;line-height:14px;color:#12126E;font-weight:normal;letter-spacing:0.62px;left:8.3px;">Miscellaneous</div>
<div class="t" style="top:409.52px;font-size:11.5px;line-height:14px;color:#12126E;font-weight:normal;letter-spacing:0.62px;left:8.3px;">HTTP Status codes</div>
<svg style="left:16px;top:426px" width="9" height="8" viewBox="0 0 9 8">
<rect x="0" y="0" width="9" height="8" fill="#A8A8B4"/><rect x="1" y="1" width="7" height="6" fill="#F6F6F2"/>
<rect x="1" y="1" width="7" height="1" fill="#B8B8A0"/><rect x="3" y="4" width="4" height="2" fill="#A8ACC8"/></svg>
<div class="t" style="top:422.52px;font-size:11.5px;line-height:14px;color:#12126E;font-weight:normal;letter-spacing:0.62px;left:29.5px;">Pages not found</div>
</div>
<div class="r" style="left:224px;top:101px;width:16px;height:449px;background:repeating-conic-gradient(#D4D0C8 0 25%, #FFFFFF 0 50%) 0 0/2px 2px;"></div>
<div class="r" style="left:224px;top:101px;width:16px;height:16px;background:#404040;"></div>
<div class="r" style="left:224px;top:101px;width:15px;height:15px;background:#D4D0C8;"></div>
<div class="r" style="left:225px;top:102px;width:14px;height:14px;background:#808080;"></div>
<div class="r" style="left:225px;top:102px;width:13px;height:13px;background:#FFFFFF;"></div>
<div class="r" style="left:226px;top:103px;width:12px;height:12px;background:#D4D0C8;"></div>
<svg style="left:228px;top:107px" width="7" height="4" viewBox="0 0 7 4"><path d="M0 4 L7 4 L3.5 0Z" fill="#000"/></svg>
<div class="r" style="left:224px;top:534px;width:16px;height:16px;background:#404040;"></div>
<div class="r" style="left:224px;top:534px;width:15px;height:15px;background:#D4D0C8;"></div>
<div class="r" style="left:225px;top:535px;width:14px;height:14px;background:#808080;"></div>
<div class="r" style="left:225px;top:535px;width:13px;height:13px;background:#FFFFFF;"></div>
<div class="r" style="left:226px;top:536px;width:12px;height:12px;background:#D4D0C8;"></div>
<svg style="left:228px;top:540px" width="8" height="4" viewBox="0 0 8 4"><path d="M0 0 L8 0 L4 4Z" fill="#000"/></svg>
<div class="r" style="left:224px;top:221px;width:16px;height:313px;background:#404040;"></div>
<div class="r" style="left:224px;top:221px;width:15px;height:312px;background:#D4D0C8;"></div>
<div class="r" style="left:225px;top:222px;width:14px;height:311px;background:#808080;"></div>
<div class="r" style="left:225px;top:222px;width:13px;height:310px;background:#FFFFFF;"></div>
<div class="r" style="left:226px;top:223px;width:12px;height:309px;background:#D4D0C8;"></div>
<div class="r" style="left:246px;top:101px;width:538px;height:433px;background:#FFFFFF;"></div>
<div style="position:absolute;left:0;top:0;width:784px;height:534px;overflow:hidden;clip-path:inset(101px 0 0 0)">
<div class="r" style="left:248px;top:100px;width:540px;height:104px;background:#CCCCDD;"></div>
<div class="r" style="left:250px;top:131px;width:538px;height:71px;background:#FFFFFF;"></div>
<div class="r" style="left:310px;top:100px;width:45px;height:30px;background:#FFAA66;"></div>
<div class="r" style="left:356px;top:100px;width:112px;height:30px;background:#F4F090;"></div>
<div class="r" style="left:469px;top:100px;width:113px;height:30px;background:#4477DD;"></div>
<div class="r" style="left:583px;top:100px;width:101px;height:30px;background:#66DDEE;"></div>
<div class="r" style="left:685px;top:100px;width:101px;height:30px;background:#2EA495;"></div>
<div class="r" style="left:309px;top:100px;width:1px;height:31px;background:#ECECEC;"></div>
<div class="r" style="left:355px;top:100px;width:1px;height:31px;background:#ECECEC;"></div>
<div class="r" style="left:468px;top:100px;width:1px;height:31px;background:#ECECEC;"></div>
<div class="r" style="left:582px;top:100px;width:1px;height:31px;background:#ECECEC;"></div>
<div class="r" style="left:684px;top:100px;width:1px;height:31px;background:#ECECEC;"></div>
<div class="r" style="left:250px;top:130px;width:538px;height:1px;background:#ECECEC;"></div>
<div class="r" style="left:309px;top:131px;width:1px;height:71px;background:#F2F2F2;"></div>
<div class="r" style="left:355px;top:131px;width:1px;height:71px;background:#F2F2F2;"></div>
<div class="r" style="left:468px;top:131px;width:1px;height:71px;background:#F2F2F2;"></div>
<div class="r" style="left:582px;top:131px;width:1px;height:71px;background:#F2F2F2;"></div>
<div class="r" style="left:684px;top:131px;width:1px;height:71px;background:#F2F2F2;"></div>
<div class="r" style="left:250px;top:161px;width:538px;height:1px;background:#F2F2F2;"></div>
<div class="t" style="top:101.62px;font-size:11.5px;line-height:14px;color:#000;font-weight:normal;letter-spacing:0.62px;left:292.50px;width:80px;text-align:center;text-indent:0.62px;">Unique</div>
<div class="t" style="top:114.22px;font-size:11.5px;line-height:14px;color:#000;font-weight:normal;letter-spacing:0.62px;left:292.50px;width:80px;text-align:center;text-indent:0.62px;">visitors</div>
<div class="t" style="top:108.62px;font-size:11.5px;line-height:14px;color:#000;font-weight:normal;letter-spacing:0.62px;left:342.00px;width:140px;text-align:center;text-indent:0.62px;">Number of visits</div>
<div class="t" style="top:108.62px;font-size:11.5px;line-height:14px;color:#000;font-weight:normal;letter-spacing:0.62px;left:470.50px;width:110px;text-align:center;text-indent:0.62px;">Pages</div>
<div class="t" style="top:108.62px;font-size:11.5px;line-height:14px;color:#000;font-weight:normal;letter-spacing:0.62px;left:583.50px;width:100px;text-align:center;text-indent:0.62px;">Hits</div>
<div class="t" style="top:108.62px;font-size:11.5px;line-height:14px;color:#000;font-weight:normal;letter-spacing:0.62px;left:685.50px;width:100px;text-align:center;text-indent:0.62px;">Bandwidth</div>
<div class="t" style="top:132.62px;font-size:11.5px;line-height:14px;color:#000;font-weight:normal;letter-spacing:0.62px;left:250.8px;">Viewed</div>
<div class="t" style="top:145.72px;font-size:11.5px;line-height:14px;color:#000;font-weight:normal;letter-spacing:0.62px;left:250.8px;">traffic *</div>
<div class="t" style="top:132.54px;font-size:12px;line-height:14px;color:#000;font-weight:bold;letter-spacing:1.65px;left:293.00px;width:80px;text-align:center;text-indent:1.65px;">9049</div>
<div class="t" style="top:132.54px;font-size:12px;line-height:14px;color:#000;font-weight:bold;letter-spacing:1.65px;left:342.00px;width:140px;text-align:center;text-indent:1.65px;">24069</div>
<div class="t" style="top:145.62px;font-size:11.5px;line-height:14px;color:#000;font-weight:normal;letter-spacing:0.74px;left:342.00px;width:140px;text-align:center;text-indent:0.74px;">(2.65 visits/visitor)</div>
<div class="t" style="top:132.54px;font-size:12px;line-height:14px;color:#000;font-weight:bold;letter-spacing:1.65px;left:455.50px;width:140px;text-align:center;text-indent:1.65px;">254362</div>
<div class="t" style="top:145.62px;font-size:11.5px;line-height:14px;color:#000;font-weight:normal;letter-spacing:0.74px;left:455.50px;width:140px;text-align:center;text-indent:0.74px;">(10.56 Pages/Visit)</div>
<div class="t" style="top:132.54px;font-size:12px;line-height:14px;color:#000;font-weight:bold;letter-spacing:1.65px;left:563.50px;width:140px;text-align:center;text-indent:1.65px;">287105</div>
<div class="t" style="top:145.62px;font-size:11.5px;line-height:14px;color:#000;font-weight:normal;letter-spacing:0.74px;left:563.50px;width:140px;text-align:center;text-indent:0.74px;">(11.92 Hits/Visit)</div>
<div class="t" style="top:132.22px;font-size:11.5px;line-height:14px;color:#000;font-weight:bold;letter-spacing:1.0px;left:665.50px;width:140px;text-align:center;text-indent:1.0px;">4.44 GB</div>
<div class="t" style="top:145.62px;font-size:11.5px;line-height:14px;color:#000;font-weight:normal;letter-spacing:0.74px;left:665.00px;width:140px;text-align:center;text-indent:0.74px;">(193.48 KB/Visit)</div>
<div class="t" style="top:161.22px;font-size:11.5px;line-height:14px;color:#000;font-weight:normal;letter-spacing:0.62px;left:250.8px;">Not</div>
<div class="t" style="top:174.22px;font-size:11.5px;line-height:14px;color:#000;font-weight:normal;letter-spacing:0.62px;left:250.8px;">viewed</div>
<div class="t" style="top:187.42px;font-size:11.5px;line-height:14px;color:#000;font-weight:normal;letter-spacing:0.62px;left:250.8px;">traffic *</div>
<div class="t" style="top:174.54px;font-size:12px;line-height:14px;color:#000;font-weight:bold;letter-spacing:1.65px;left:455.50px;width:140px;text-align:center;text-indent:1.65px;">414260</div>
<div class="t" style="top:174.54px;font-size:12px;line-height:14px;color:#000;font-weight:bold;letter-spacing:1.65px;left:563.50px;width:140px;text-align:center;text-indent:1.65px;">422980</div>
<div class="t" style="top:174.22px;font-size:11.5px;line-height:14px;color:#000;font-weight:bold;letter-spacing:1.0px;left:665.50px;width:140px;text-align:center;text-indent:1.0px;">5.98 GB</div>
<div class="t" style="top:204.02px;font-size:11.5px;line-height:14px;color:#000;font-weight:normal;letter-spacing:0.71px;left:248.5px;">* Not viewed traffic includes traffic generated by robots, worms, or replies with special</div>
<div class="t" style="top:217.02px;font-size:11.5px;line-height:14px;color:#000;font-weight:normal;letter-spacing:0.62px;left:248.5px;">HTTP status codes.</div>
<div class="r" style="left:248px;top:256px;width:365px;height:20px;background:#CCCCDD;"></div>
<div class="t" style="top:256.80px;font-size:13px;line-height:16px;color:#000;font-weight:bold;letter-spacing:0.95px;left:330.50px;width:200px;text-align:center;text-indent:0.95px;">Monthly history</div>
<div class="r" style="left:613px;top:274px;width:157px;height:2px;background:#CCCCDD;"></div>
<div class="r" style="left:248px;top:276px;width:2px;height:258px;background:#CCCCDD;"></div>
<div class="r" style="left:768px;top:276px;width:2px;height:258px;background:#CCCCDD;"></div>
<div class="r" style="left:306px;top:372px;width:6px;height:1px;background:#A88868;"></div>
<div class="r" style="left:312px;top:372px;width:6px;height:1px;background:#A8A888;"></div>
<div class="r" style="left:318px;top:372px;width:6px;height:1px;background:#5070A0;"></div>
<div class="r" style="left:324px;top:372px;width:6px;height:1px;background:#50A8B8;"></div>
<div class="r" style="left:330px;top:372px;width:6px;height:1px;background:#307060;"></div>
<div class="t" style="top:376.62px;font-size:11.5px;line-height:14px;color:#000;font-weight:normal;letter-spacing:0.62px;left:301.00px;width:40px;text-align:center;text-indent:0.62px;">Jan</div>
<div class="t" style="top:389.62px;font-size:11.5px;line-height:14px;color:#000;font-weight:normal;letter-spacing:0.62px;left:301.00px;width:40px;text-align:center;text-indent:0.62px;">2009</div>
<div class="r" style="left:340px;top:372px;width:6px;height:1px;background:#A88868;"></div>
<div class="r" style="left:346px;top:372px;width:6px;height:1px;background:#A8A888;"></div>
<div class="r" style="left:352px;top:372px;width:6px;height:1px;background:#5070A0;"></div>
<div class="r" style="left:358px;top:372px;width:6px;height:1px;background:#50A8B8;"></div>
<div class="r" style="left:364px;top:372px;width:6px;height:1px;background:#307060;"></div>
<div class="t" style="top:376.62px;font-size:11.5px;line-height:14px;color:#000;font-weight:normal;letter-spacing:0.62px;left:335.00px;width:40px;text-align:center;text-indent:0.62px;">Feb</div>
<div class="t" style="top:389.62px;font-size:11.5px;line-height:14px;color:#000;font-weight:normal;letter-spacing:0.62px;left:335.00px;width:40px;text-align:center;text-indent:0.62px;">2009</div>
<div class="r" style="left:374px;top:372px;width:6px;height:1px;background:#A88868;"></div>
<div class="r" style="left:380px;top:372px;width:6px;height:1px;background:#A8A888;"></div>
<div class="r" style="left:386px;top:372px;width:6px;height:1px;background:#5070A0;"></div>
<div class="r" style="left:392px;top:372px;width:6px;height:1px;background:#50A8B8;"></div>
<div class="r" style="left:398px;top:372px;width:6px;height:1px;background:#307060;"></div>
<div class="t" style="top:376.62px;font-size:11.5px;line-height:14px;color:#000;font-weight:normal;letter-spacing:0.62px;left:369.00px;width:40px;text-align:center;text-indent:0.62px;">Mar</div>
<div class="t" style="top:389.62px;font-size:11.5px;line-height:14px;color:#000;font-weight:normal;letter-spacing:0.62px;left:369.00px;width:40px;text-align:center;text-indent:0.62px;">2009</div>
<div class="r" style="left:408px;top:372px;width:6px;height:1px;background:#A88868;"></div>
<div class="r" style="left:414px;top:372px;width:6px;height:1px;background:#A8A888;"></div>
<div class="r" style="left:420px;top:372px;width:6px;height:1px;background:#5070A0;"></div>
<div class="r" style="left:426px;top:372px;width:6px;height:1px;background:#50A8B8;"></div>
<div class="r" style="left:432px;top:372px;width:6px;height:1px;background:#307060;"></div>
<div class="t" style="top:376.62px;font-size:11.5px;line-height:14px;color:#000;font-weight:normal;letter-spacing:0.62px;left:403.00px;width:40px;text-align:center;text-indent:0.62px;">Apr</div>
<div class="t" style="top:389.62px;font-size:11.5px;line-height:14px;color:#000;font-weight:normal;letter-spacing:0.62px;left:403.00px;width:40px;text-align:center;text-indent:0.62px;">2009</div>
<div class="r" style="left:442px;top:372px;width:6px;height:1px;background:#A88868;"></div>
<div class="r" style="left:448px;top:372px;width:6px;height:1px;background:#A8A888;"></div>
<div class="r" style="left:454px;top:372px;width:6px;height:1px;background:#5070A0;"></div>
<div class="r" style="left:460px;top:372px;width:6px;height:1px;background:#50A8B8;"></div>
<div class="r" style="left:466px;top:372px;width:6px;height:1px;background:#307060;"></div>
<div class="t" style="top:376.62px;font-size:11.5px;line-height:14px;color:#000;font-weight:normal;letter-spacing:0.62px;left:437.00px;width:40px;text-align:center;text-indent:0.62px;">May</div>
<div class="t" style="top:389.62px;font-size:11.5px;line-height:14px;color:#000;font-weight:normal;letter-spacing:0.62px;left:437.00px;width:40px;text-align:center;text-indent:0.62px;">2009</div>
<div class="r" style="left:476px;top:372px;width:6px;height:1px;background:#A88868;"></div>
<div class="r" style="left:482px;top:372px;width:6px;height:1px;background:#A8A888;"></div>
<div class="r" style="left:488px;top:372px;width:6px;height:1px;background:#5070A0;"></div>
<div class="r" style="left:494px;top:372px;width:6px;height:1px;background:#50A8B8;"></div>
<div class="r" style="left:500px;top:372px;width:6px;height:1px;background:#307060;"></div>
<div class="t" style="top:376.62px;font-size:11.5px;line-height:14px;color:#000;font-weight:normal;letter-spacing:0.62px;left:471.00px;width:40px;text-align:center;text-indent:0.62px;">Jun</div>
<div class="t" style="top:389.62px;font-size:11.5px;line-height:14px;color:#000;font-weight:normal;letter-spacing:0.62px;left:471.00px;width:40px;text-align:center;text-indent:0.62px;">2009</div>
<div class="r" style="left:510px;top:372px;width:6px;height:1px;background:#A88868;"></div>
<div class="r" style="left:516px;top:372px;width:6px;height:1px;background:#A8A888;"></div>
<div class="r" style="left:522px;top:372px;width:6px;height:1px;background:#5070A0;"></div>
<div class="r" style="left:528px;top:372px;width:6px;height:1px;background:#50A8B8;"></div>
<div class="r" style="left:534px;top:372px;width:6px;height:1px;background:#307060;"></div>
<div class="t" style="top:376.62px;font-size:11.5px;line-height:14px;color:#000;font-weight:normal;letter-spacing:0.62px;left:505.00px;width:40px;text-align:center;text-indent:0.62px;">Jul</div>
<div class="t" style="top:389.62px;font-size:11.5px;line-height:14px;color:#000;font-weight:normal;letter-spacing:0.62px;left:505.00px;width:40px;text-align:center;text-indent:0.62px;">2009</div>
<div class="r" style="left:544px;top:364px;width:6px;height:9px;background:linear-gradient(90deg,#C07828,#F8B468 45%,#B06818);"></div>
<div class="r" style="left:550px;top:357px;width:6px;height:16px;background:linear-gradient(90deg,#B8A860,#F0E098 45%,#A89850);"></div>
<div class="r" style="left:556px;top:350px;width:6px;height:23px;background:linear-gradient(90deg,#2858B8,#78A8F0 45%,#1848A0);"></div>
<div class="r" style="left:562px;top:347px;width:6px;height:26px;background:linear-gradient(90deg,#38B8C8,#88F4FF 45%,#2898A8);"></div>
<div class="r" style="left:568px;top:362px;width:6px;height:11px;background:linear-gradient(90deg,#1E8A68,#3CB08C 45%,#0E6048);"></div>
<div class="t" style="top:376.62px;font-size:11.5px;line-height:14px;color:#000;font-weight:normal;letter-spacing:0.62px;left:539.00px;width:40px;text-align:center;text-indent:0.62px;">Aug</div>
<div class="t" style="top:389.62px;font-size:11.5px;line-height:14px;color:#000;font-weight:normal;letter-spacing:0.62px;left:539.00px;width:40px;text-align:center;text-indent:0.62px;">2009</div>
<div class="r" style="left:578px;top:352px;width:6px;height:21px;background:linear-gradient(90deg,#C07828,#F8B468 45%,#B06818);"></div>
<div class="r" style="left:584px;top:326px;width:6px;height:47px;background:linear-gradient(90deg,#B8A860,#F0E098 45%,#A89850);"></div>
<div class="r" style="left:590px;top:341px;width:6px;height:32px;background:linear-gradient(90deg,#2858B8,#78A8F0 45%,#1848A0);"></div>
<div class="r" style="left:596px;top:334px;width:6px;height:39px;background:linear-gradient(90deg,#38B8C8,#88F4FF 45%,#2898A8);"></div>
<div class="r" style="left:602px;top:348px;width:6px;height:25px;background:linear-gradient(90deg,#1E8A68,#3CB08C 45%,#0E6048);"></div>
<div class="t" style="top:376.62px;font-size:11.5px;line-height:14px;color:#000;font-weight:normal;letter-spacing:0.62px;left:573.00px;width:40px;text-align:center;text-indent:0.62px;">Sep</div>
<div class="t" style="top:389.62px;font-size:11.5px;line-height:14px;color:#000;font-weight:normal;letter-spacing:0.62px;left:573.00px;width:40px;text-align:center;text-indent:0.62px;">2009</div>
<div class="r" style="left:613px;top:339px;width:6px;height:34px;background:linear-gradient(90deg,#C07828,#F8B468 45%,#B06818);"></div>
<div class="r" style="left:619px;top:282px;width:6px;height:91px;background:linear-gradient(90deg,#B8A860,#F0E098 45%,#A89850);"></div>
<div class="r" style="left:625px;top:293px;width:6px;height:80px;background:linear-gradient(90deg,#2858B8,#78A8F0 45%,#1848A0);"></div>
<div class="r" style="left:631px;top:282px;width:6px;height:91px;background:linear-gradient(90deg,#38B8C8,#88F4FF 45%,#2898A8);"></div>
<div class="r" style="left:637px;top:282px;width:6px;height:91px;background:linear-gradient(90deg,#1E8A68,#3CB08C 45%,#0E6048);"></div>
<div class="t" style="top:376.62px;font-size:11.5px;line-height:14px;color:#000;font-weight:bold;letter-spacing:1.0px;left:608.00px;width:40px;text-align:center;text-indent:1.0px;">Oct</div>
<div class="t" style="top:389.44px;font-size:12px;line-height:14px;color:#000;font-weight:bold;letter-spacing:1.65px;left:608.00px;width:40px;text-align:center;text-indent:1.65px;">2009</div>
<div class="r" style="left:648px;top:372px;width:6px;height:1px;background:#A88868;"></div>
<div class="r" style="left:654px;top:372px;width:6px;height:1px;background:#A8A888;"></div>
<div class="r" style="left:660px;top:372px;width:6px;height:1px;background:#5070A0;"></div>
<div class="r" style="left:666px;top:372px;width:6px;height:1px;background:#50A8B8;"></div>
<div class="r" style="left:672px;top:372px;width:6px;height:1px;background:#307060;"></div>
<div class="t" style="top:376.62px;font-size:11.5px;line-height:14px;color:#000;font-weight:normal;letter-spacing:0.62px;left:643.00px;width:40px;text-align:center;text-indent:0.62px;">Nov</div>
<div class="t" style="top:389.62px;font-size:11.5px;line-height:14px;color:#000;font-weight:normal;letter-spacing:0.62px;left:643.00px;width:40px;text-align:center;text-indent:0.62px;">2009</div>
<div class="r" style="left:682px;top:372px;width:6px;height:1px;background:#A88868;"></div>
<div class="r" style="left:688px;top:372px;width:6px;height:1px;background:#A8A888;"></div>
<div class="r" style="left:694px;top:372px;width:6px;height:1px;background:#5070A0;"></div>
<div class="r" style="left:700px;top:372px;width:6px;height:1px;background:#50A8B8;"></div>
<div class="r" style="left:706px;top:372px;width:6px;height:1px;background:#307060;"></div>
<div class="t" style="top:376.62px;font-size:11.5px;line-height:14px;color:#000;font-weight:normal;letter-spacing:0.62px;left:677.00px;width:40px;text-align:center;text-indent:0.62px;">Dec</div>
<div class="t" style="top:389.62px;font-size:11.5px;line-height:14px;color:#000;font-weight:normal;letter-spacing:0.62px;left:677.00px;width:40px;text-align:center;text-indent:0.62px;">2009</div>
<div class="r" style="left:258px;top:421px;width:82px;height:28px;background:#ECECEC;"></div>
<div class="r" style="left:342px;top:421px;width:82px;height:28px;background:#FFAA66;"></div>
<div class="r" style="left:426px;top:421px;width:82px;height:28px;background:#F4F090;"></div>
<div class="r" style="left:510px;top:421px;width:82px;height:28px;background:#4477DD;"></div>
<div class="r" style="left:594px;top:421px;width:82px;height:28px;background:#66DDEE;"></div>
<div class="r" style="left:678px;top:421px;width:82px;height:28px;background:#2EA495;"></div>
<div class="t" style="top:429.02px;font-size:11.5px;line-height:14px;color:#000;font-weight:normal;letter-spacing:0.62px;left:259.00px;width:80px;text-align:center;text-indent:0.62px;">Month</div>
<div class="t" style="top:422.02px;font-size:11.5px;line-height:14px;color:#000;font-weight:normal;letter-spacing:0.62px;left:343.00px;width:80px;text-align:center;text-indent:0.62px;">Unique</div>
<div class="t" style="top:434.62px;font-size:11.5px;line-height:14px;color:#000;font-weight:normal;letter-spacing:0.62px;left:343.00px;width:80px;text-align:center;text-indent:0.62px;">visitors</div>
<div class="t" style="top:422.02px;font-size:11.5px;line-height:14px;color:#000;font-weight:normal;letter-spacing:0.62px;left:427.00px;width:80px;text-align:center;text-indent:0.62px;">Number of</div>
<div class="t" style="top:434.62px;font-size:11.5px;line-height:14px;color:#000;font-weight:normal;letter-spacing:0.62px;left:427.00px;width:80px;text-align:center;text-indent:0.62px;">visits</div>
<div class="t" style="top:429.02px;font-size:11.5px;line-height:14px;color:#000;font-weight:normal;letter-spacing:0.62px;left:511.00px;width:80px;text-align:center;text-indent:0.62px;">Pages</div>
<div class="t" style="top:429.02px;font-size:11.5px;line-height:14px;color:#000;font-weight:normal;letter-spacing:0.62px;left:595.00px;width:80px;text-align:center;text-indent:0.62px;">Hits</div>
<div class="t" style="top:429.02px;font-size:11.5px;line-height:14px;color:#000;font-weight:normal;letter-spacing:0.62px;left:679.00px;width:80px;text-align:center;text-indent:0.62px;">Bandwidth</div>
<div class="t" style="top:451.62px;font-size:11.5px;line-height:14px;color:#000;font-weight:normal;letter-spacing:0.62px;left:258.50px;width:80px;text-align:center;text-indent:0.62px;">Jan 2009</div>
<div class="t" style="top:451.62px;font-size:11.5px;line-height:14px;color:#000;font-weight:normal;letter-spacing:0.62px;left:363.00px;width:40px;text-align:center;text-indent:0.62px;">0</div>
<div class="t" style="top:451.62px;font-size:11.5px;line-height:14px;color:#000;font-weight:normal;letter-spacing:0.62px;left:447.00px;width:40px;text-align:center;text-indent:0.62px;">0</div>
<div class="t" style="top:451.62px;font-size:11.5px;line-height:14px;color:#000;font-weight:normal;letter-spacing:0.62px;left:531.00px;width:40px;text-align:center;text-indent:0.62px;">0</div>
<div class="t" style="top:451.62px;font-size:11.5px;line-height:14px;color:#000;font-weight:normal;letter-spacing:0.62px;left:615.00px;width:40px;text-align:center;text-indent:0.62px;">0</div>
<div class="t" style="top:451.62px;font-size:11.5px;line-height:14px;color:#000;font-weight:normal;letter-spacing:0.62px;left:699.00px;width:40px;text-align:center;text-indent:0.62px;">0</div>
<div class="t" style="top:468.62px;font-size:11.5px;line-height:14px;color:#000;font-weight:normal;letter-spacing:0.62px;left:258.50px;width:80px;text-align:center;text-indent:0.62px;">Feb 2009</div>
<div class="t" style="top:468.62px;font-size:11.5px;line-height:14px;color:#000;font-weight:normal;letter-spacing:0.62px;left:363.00px;width:40px;text-align:center;text-indent:0.62px;">0</div>
<div class="t" style="top:468.62px;font-size:11.5px;line-height:14px;color:#000;font-weight:normal;letter-spacing:0.62px;left:447.00px;width:40px;text-align:center;text-indent:0.62px;">0</div>
<div class="t" style="top:468.62px;font-size:11.5px;line-height:14px;color:#000;font-weight:normal;letter-spacing:0.62px;left:531.00px;width:40px;text-align:center;text-indent:0.62px;">0</div>
<div class="t" style="top:468.62px;font-size:11.5px;line-height:14px;color:#000;font-weight:normal;letter-spacing:0.62px;left:615.00px;width:40px;text-align:center;text-indent:0.62px;">0</div>
<div class="t" style="top:468.62px;font-size:11.5px;line-height:14px;color:#000;font-weight:normal;letter-spacing:0.62px;left:699.00px;width:40px;text-align:center;text-indent:0.62px;">0</div>
<div class="t" style="top:485.62px;font-size:11.5px;line-height:14px;color:#000;font-weight:normal;letter-spacing:0.62px;left:258.50px;width:80px;text-align:center;text-indent:0.62px;">Mar 2009</div>
<div class="t" style="top:485.62px;font-size:11.5px;line-height:14px;color:#000;font-weight:normal;letter-spacing:0.62px;left:363.00px;width:40px;text-align:center;text-indent:0.62px;">0</div>
<div class="t" style="top:485.62px;font-size:11.5px;line-height:14px;color:#000;font-weight:normal;letter-spacing:0.62px;left:447.00px;width:40px;text-align:center;text-indent:0.62px;">0</div>
<div class="t" style="top:485.62px;font-size:11.5px;line-height:14px;color:#000;font-weight:normal;letter-spacing:0.62px;left:531.00px;width:40px;text-align:center;text-indent:0.62px;">0</div>
<div class="t" style="top:485.62px;font-size:11.5px;line-height:14px;color:#000;font-weight:normal;letter-spacing:0.62px;left:615.00px;width:40px;text-align:center;text-indent:0.62px;">0</div>
<div class="t" style="top:485.62px;font-size:11.5px;line-height:14px;color:#000;font-weight:normal;letter-spacing:0.62px;left:699.00px;width:40px;text-align:center;text-indent:0.62px;">0</div>
<div class="t" style="top:502.62px;font-size:11.5px;line-height:14px;color:#000;font-weight:normal;letter-spacing:0.62px;left:258.50px;width:80px;text-align:center;text-indent:0.62px;">Apr 2009</div>
<div class="t" style="top:502.62px;font-size:11.5px;line-height:14px;color:#000;font-weight:normal;letter-spacing:0.62px;left:363.00px;width:40px;text-align:center;text-indent:0.62px;">0</div>
<div class="t" style="top:502.62px;font-size:11.5px;line-height:14px;color:#000;font-weight:normal;letter-spacing:0.62px;left:447.00px;width:40px;text-align:center;text-indent:0.62px;">0</div>
<div class="t" style="top:502.62px;font-size:11.5px;line-height:14px;color:#000;font-weight:normal;letter-spacing:0.62px;left:531.00px;width:40px;text-align:center;text-indent:0.62px;">0</div>
<div class="t" style="top:502.62px;font-size:11.5px;line-height:14px;color:#000;font-weight:normal;letter-spacing:0.62px;left:615.00px;width:40px;text-align:center;text-indent:0.62px;">0</div>
<div class="t" style="top:502.62px;font-size:11.5px;line-height:14px;color:#000;font-weight:normal;letter-spacing:0.62px;left:699.00px;width:40px;text-align:center;text-indent:0.62px;">0</div>
<div class="t" style="top:519.62px;font-size:11.5px;line-height:14px;color:#000;font-weight:normal;letter-spacing:0.62px;left:258.50px;width:80px;text-align:center;text-indent:0.62px;">May 2009</div>
<div class="t" style="top:519.62px;font-size:11.5px;line-height:14px;color:#000;font-weight:normal;letter-spacing:0.62px;left:363.00px;width:40px;text-align:center;text-indent:0.62px;">0</div>
<div class="t" style="top:519.62px;font-size:11.5px;line-height:14px;color:#000;font-weight:normal;letter-spacing:0.62px;left:447.00px;width:40px;text-align:center;text-indent:0.62px;">0</div>
<div class="t" style="top:519.62px;font-size:11.5px;line-height:14px;color:#000;font-weight:normal;letter-spacing:0.62px;left:531.00px;width:40px;text-align:center;text-indent:0.62px;">0</div>
<div class="t" style="top:519.62px;font-size:11.5px;line-height:14px;color:#000;font-weight:normal;letter-spacing:0.62px;left:615.00px;width:40px;text-align:center;text-indent:0.62px;">0</div>
<div class="t" style="top:519.62px;font-size:11.5px;line-height:14px;color:#000;font-weight:normal;letter-spacing:0.62px;left:699.00px;width:40px;text-align:center;text-indent:0.62px;">0</div>
</div>
<div class="r" style="left:784px;top:101px;width:16px;height:433px;background:repeating-conic-gradient(#D4D0C8 0 25%, #FFFFFF 0 50%) 0 0/2px 2px;"></div>
<div class="r" style="left:784px;top:101px;width:16px;height:16px;background:#404040;"></div>
<div class="r" style="left:784px;top:101px;width:15px;height:15px;background:#D4D0C8;"></div>
<div class="r" style="left:785px;top:102px;width:14px;height:14px;background:#808080;"></div>
<div class="r" style="left:785px;top:102px;width:13px;height:13px;background:#FFFFFF;"></div>
<div class="r" style="left:786px;top:103px;width:12px;height:12px;background:#D4D0C8;"></div>
<svg style="left:788px;top:107px" width="7" height="4" viewBox="0 0 7 4"><path d="M0 4 L7 4 L3.5 0Z" fill="#000"/></svg>
<div class="r" style="left:784px;top:130px;width:16px;height:27px;background:#404040;"></div>
<div class="r" style="left:784px;top:130px;width:15px;height:26px;background:#D4D0C8;"></div>
<div class="r" style="left:785px;top:131px;width:14px;height:25px;background:#808080;"></div>
<div class="r" style="left:785px;top:131px;width:13px;height:24px;background:#FFFFFF;"></div>
<div class="r" style="left:786px;top:132px;width:12px;height:23px;background:#D4D0C8;"></div>
<div class="r" style="left:784px;top:519px;width:16px;height:15px;background:#404040;"></div>
<div class="r" style="left:784px;top:519px;width:15px;height:14px;background:#D4D0C8;"></div>
<div class="r" style="left:785px;top:520px;width:14px;height:13px;background:#808080;"></div>
<div class="r" style="left:785px;top:520px;width:13px;height:12px;background:#FFFFFF;"></div>
<div class="r" style="left:786px;top:521px;width:12px;height:11px;background:#D4D0C8;"></div>
<svg style="left:788px;top:524px" width="8" height="4" viewBox="0 0 8 4"><path d="M0 0 L8 0 L4 4Z" fill="#000"/></svg>
<div class="r" style="left:246px;top:534px;width:538px;height:16px;background:repeating-conic-gradient(#D4D0C8 0 25%, #FFFFFF 0 50%) 0 0/2px 2px;"></div>
<div class="r" style="left:246px;top:534px;width:16px;height:16px;background:#404040;"></div>
<div class="r" style="left:246px;top:534px;width:15px;height:15px;background:#D4D0C8;"></div>
<div class="r" style="left:247px;top:535px;width:14px;height:14px;background:#808080;"></div>
<div class="r" style="left:247px;top:535px;width:13px;height:13px;background:#FFFFFF;"></div>
<div class="r" style="left:248px;top:536px;width:12px;height:12px;background:#D4D0C8;"></div>
<svg style="left:251px;top:538px" width="4" height="8" viewBox="0 0 4 8"><path d="M4 0 L4 8 L0 4Z" fill="#000"/></svg>
<div class="r" style="left:267px;top:534px;width:368px;height:16px;background:#404040;"></div>
<div class="r" style="left:267px;top:534px;width:367px;height:15px;background:#D4D0C8;"></div>
<div class="r" style="left:268px;top:535px;width:366px;height:14px;background:#808080;"></div>
<div class="r" style="left:268px;top:535px;width:365px;height:13px;background:#FFFFFF;"></div>
<div class="r" style="left:269px;top:536px;width:364px;height:12px;background:#D4D0C8;"></div>
<div class="r" style="left:768px;top:534px;width:16px;height:16px;background:#404040;"></div>
<div class="r" style="left:768px;top:534px;width:15px;height:15px;background:#D4D0C8;"></div>
<div class="r" style="left:769px;top:535px;width:14px;height:14px;background:#808080;"></div>
<div class="r" style="left:769px;top:535px;width:13px;height:13px;background:#FFFFFF;"></div>
<div class="r" style="left:770px;top:536px;width:12px;height:12px;background:#D4D0C8;"></div>
<svg style="left:774px;top:538px" width="4" height="8" viewBox="0 0 4 8"><path d="M0 0 L0 8 L4 4Z" fill="#000"/></svg>
<div class="r" style="left:784px;top:534px;width:16px;height:16px;background:#D4D0C8;"></div>
</body></html>
